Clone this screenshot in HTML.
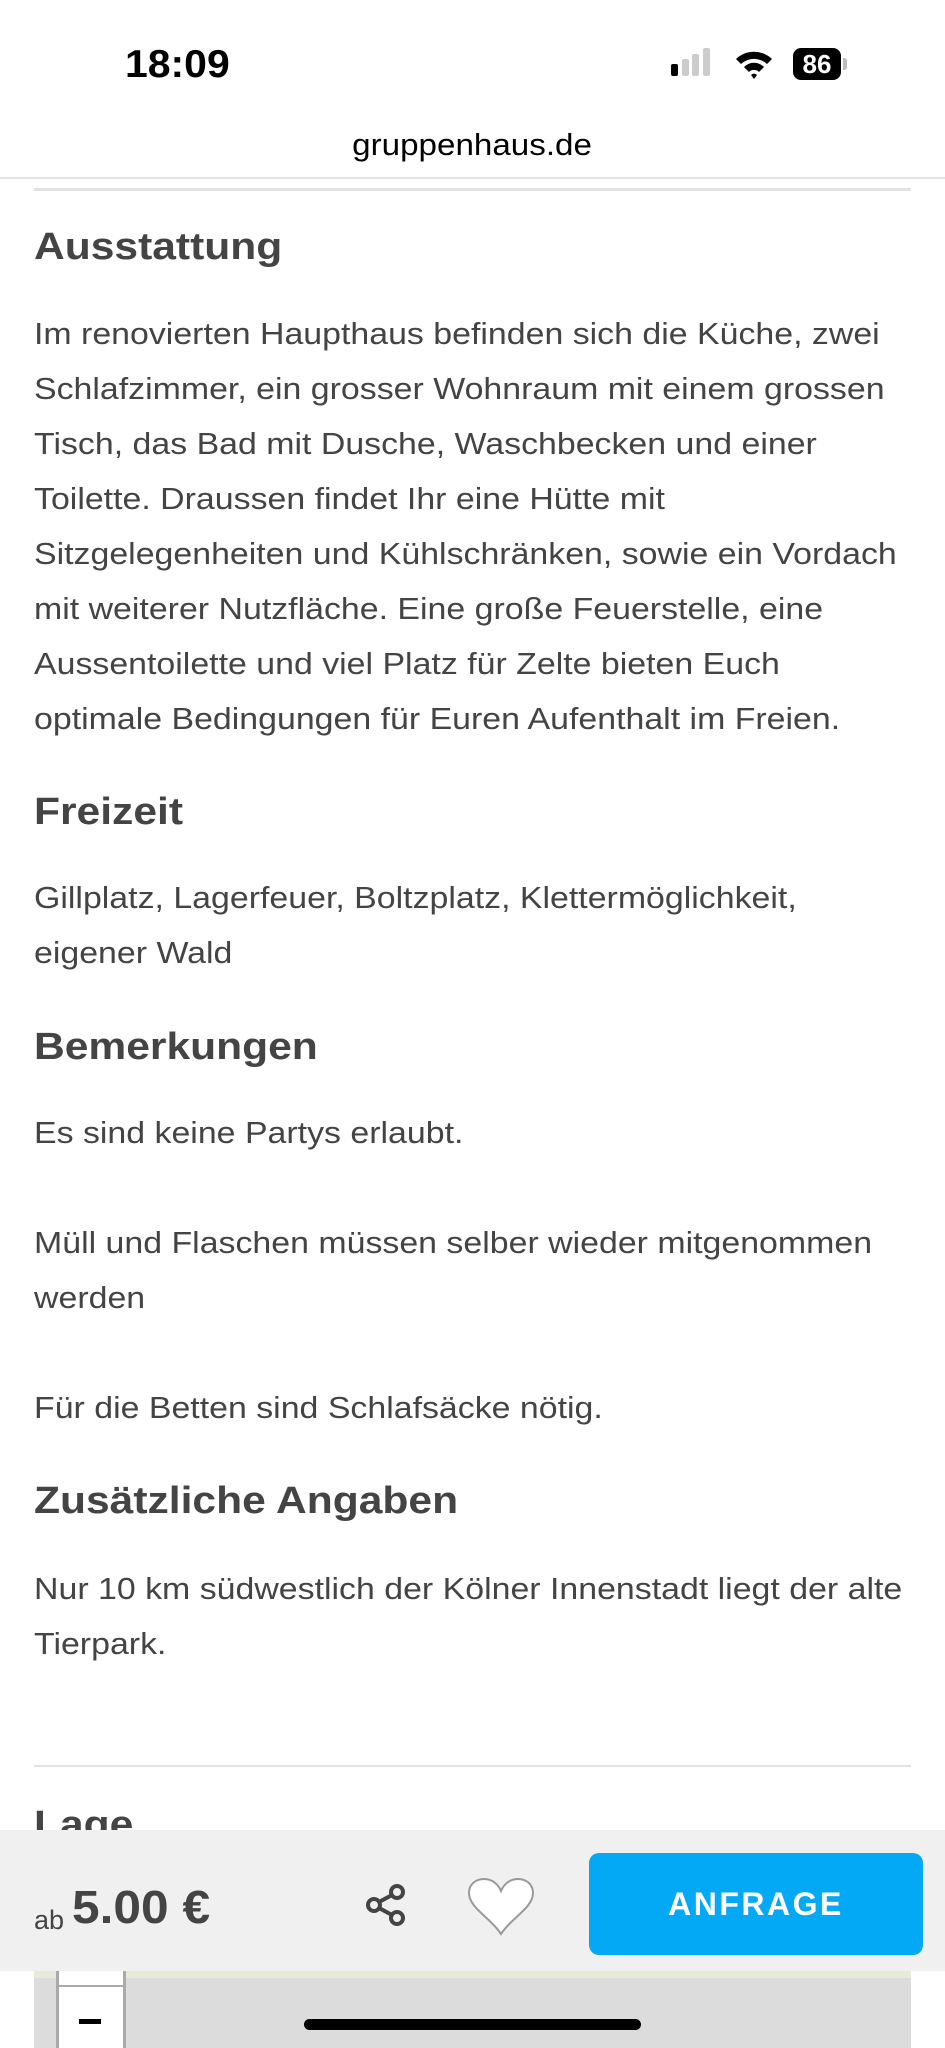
<!DOCTYPE html>
<html><head><meta charset="utf-8"><style>
*{margin:0;padding:0;box-sizing:border-box}
body{width:945px;height:2048px;overflow:hidden;background:#fff;font-family:"Liberation Sans",sans-serif;color:#444;position:relative}
.abs{position:absolute;white-space:nowrap}
h2{position:absolute;left:34px;font-size:38px;font-weight:bold;color:#444;white-space:nowrap;line-height:1;transform:scaleX(1.12);transform-origin:left}
.p{position:absolute;left:34px;font-size:31px;line-height:55px;white-space:nowrap;color:#444;transform:scaleX(1.093);transform-origin:left top}
</style></head><body>
<div class="abs" style="left:125px;top:43px;font-size:39px;font-weight:bold;color:#000;transform:scaleX(1.05);transform-origin:left">18:09</div>
<div class="abs" style="left:671px;top:64px;width:7px;height:12px;background:#000;border-radius:2px"></div>
<div class="abs" style="left:682px;top:59px;width:7px;height:17px;background:#ccc;border-radius:2px"></div>
<div class="abs" style="left:692px;top:54px;width:7px;height:22px;background:#ccc;border-radius:2px"></div>
<div class="abs" style="left:703px;top:48px;width:7px;height:28px;background:#ccc;border-radius:2px"></div>
<svg class="abs" style="left:734px;top:48px" width="40" height="32" viewBox="0 0 40 32"><path d="M2 11 A26 26 0 0 1 38 11 L33 16 A19 19 0 0 0 7 16Z M10 19 A14 14 0 0 1 30 19 L25 24 A7 7 0 0 0 15 24Z M17 27 L20 31 L23 27 A4 4 0 0 0 17 27Z" fill="#000"/></svg>
<div class="abs" style="left:793px;top:48px;width:48px;height:32px;background:#000;border-radius:8px;color:#fff;font-weight:bold;font-size:26px;text-align:center;line-height:32px">86</div>
<div class="abs" style="left:843px;top:58px;width:4px;height:12px;background:#bbb;border-radius:0 3px 3px 0"></div>
<div class="abs" style="left:0;width:945px;top:127px;text-align:center;font-size:31px;color:#000"><span style="display:inline-block;transform:scaleX(1.07)">gruppenhaus.de</span></div>
<div class="abs" style="left:0;top:177px;width:945px;height:2px;background:#e2e2e2"></div>
<div class="abs" style="left:34px;top:188px;width:877px;height:3px;background:#e2e2e2"></div>

<h2 style="top:228px">Ausstattung</h2>
<div class="p" style="top:306px">Im renovierten Haupthaus befinden sich die Küche, zwei<br>Schlafzimmer, ein grosser Wohnraum mit einem grossen<br>Tisch, das Bad mit Dusche, Waschbecken und einer<br>Toilette. Draussen findet Ihr eine Hütte mit<br>Sitzgelegenheiten und Kühlschränken, sowie ein Vordach<br>mit weiterer Nutzfläche. Eine große Feuerstelle, eine<br>Aussentoilette und viel Platz für Zelte bieten Euch<br>optimale Bedingungen für Euren Aufenthalt im Freien.</div>

<h2 style="top:793px">Freizeit</h2>
<div class="p" style="top:870px">Gillplatz, Lagerfeuer, Boltzplatz, Klettermöglichkeit,<br>eigener Wald</div>

<h2 style="top:1028px">Bemerkungen</h2>
<div class="p" style="top:1105px">Es sind keine Partys erlaubt.<br><br>Müll und Flaschen müssen selber wieder mitgenommen<br>werden<br><br>Für die Betten sind Schlafsäcke nötig.</div>

<h2 style="top:1482px">Zusätzliche Angaben</h2>
<div class="p" style="top:1561px">Nur 10 km südwestlich der Kölner Innenstadt liegt der alte<br>Tierpark.</div>

<div class="abs" style="left:34px;top:1765px;width:877px;height:2px;background:#e2e2e2"></div>
<h2 style="top:1806px">Lage</h2>

<div class="abs" style="left:34px;top:1971px;width:877px;height:77px;background:#dcdcdc"></div>
<div class="abs" style="left:34px;top:1971px;width:877px;height:7px;background:#e6ecd8"></div>
<div class="abs" style="left:56px;top:1971px;width:70px;height:77px;background:#fff;border-left:3px solid #aaa;border-right:3px solid #aaa"></div>
<div class="abs" style="left:59px;top:1985px;width:64px;height:2px;background:#aaa"></div>
<div class="abs" style="left:79px;top:2019px;width:22px;height:5px;background:#000"></div>
<div class="abs" style="left:304px;top:2019px;width:337px;height:11px;background:#000;border-radius:6px"></div>

<div class="abs" style="left:0;top:1830px;width:945px;height:141px;background:#f0f0f0"></div>
<div class="abs" style="left:34px;top:1880px;font-size:27px;color:#444"><span style="position:relative;top:6px">ab</span> <span style="display:inline-block;font-size:46px;font-weight:bold;transform:scaleX(1.08);transform-origin:left">5.00 €</span></div>
<svg class="abs" style="left:364px;top:1882px" width="46" height="46" viewBox="0 0 46 46"><g fill="none" stroke="#444" stroke-width="4"><circle cx="33" cy="10" r="6"/><circle cx="10" cy="23" r="6"/><circle cx="33" cy="36" r="6"/><path d="M15 20 L28 13 M15 26 L28 33"/></g></svg>
<svg class="abs" style="left:466px;top:1878px" width="70" height="58" viewBox="0 0 70 58"><path d="M35 56 C25 40 3 30 3 15 C3 6 10 1 18 1 C26 1 32 6 35 13 C38 6 44 1 52 1 C60 1 67 6 67 15 C67 30 45 40 35 56Z" fill="#fff" stroke="#999" stroke-width="2"/></svg>
<div class="abs" style="left:589px;top:1853px;width:334px;height:102px;background:#03a9f4;border-radius:10px;color:#fff;font-weight:bold;font-size:32px;letter-spacing:2.5px;text-align:center;line-height:102px">ANFRAGE</div>
</body></html>
